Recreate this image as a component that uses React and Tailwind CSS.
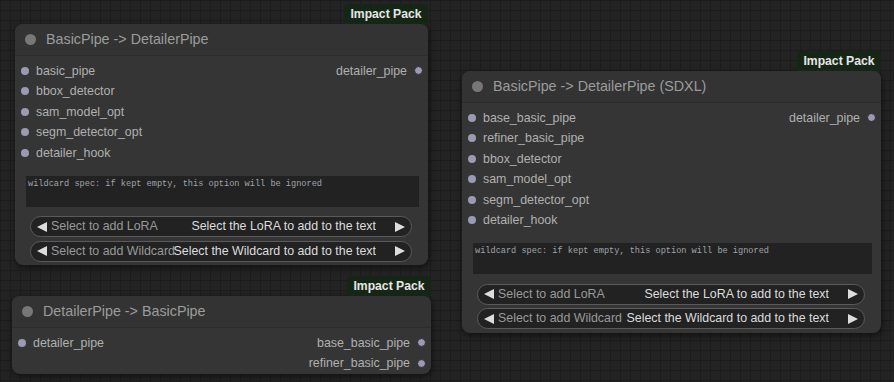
import React from "react";

const FONT = { fontFamily: '"Liberation Sans", Arial, sans-serif' };

function Dot({ out }) {
  return out ? (
    <span className="block w-[9px] h-[9px] rounded-full bg-[#9a9ab0] border-[1.5px] border-[#2a2a33] shrink-0" />
  ) : (
    <span className="block w-[8px] h-[8px] rounded-full bg-[#9a9ab0] shrink-0" />
  );
}

function Row({ input, output }) {
  return (
    <div className="h-[20.5px] flex items-center justify-between text-[12.4px] text-[#b0b0b0] leading-none">
      <div className="flex items-center">
        {input && (
          <>
            <span className="w-[21px] flex items-center pl-[6px]">
              <Dot />
            </span>
            <span>{input}</span>
          </>
        )}
      </div>
      <div className="flex items-center">
        {output && (
          <>
            <span>{output}</span>
            <span className="w-[21px] flex items-center justify-end pr-[5px]">
              <Dot out />
            </span>
          </>
        )}
      </div>
    </div>
  );
}

function TriLeft() {
  return (
    <svg width="10" height="10" viewBox="0 0 10 10" className="shrink-0">
      <polygon points="10,0 10,10 0,5" fill="#dddddd" />
    </svg>
  );
}
function TriRight() {
  return (
    <svg width="10" height="10" viewBox="0 0 10 10" className="shrink-0">
      <polygon points="0,0 0,10 10,5" fill="#dddddd" />
    </svg>
  );
}

function Combo({ label, value }) {
  return (
    <div className="h-[21px] ml-[15px] mr-[16px] rounded-full bg-[#222222] border border-[#5a5a5a] flex items-center pl-[6px] pr-[6px] text-[12.4px] leading-none">
      <TriLeft />
      <div className="flex-1 grid items-center ml-[4px] mr-[19px] overflow-hidden">
        <span className="[grid-area:1/1] justify-self-start text-[#999999] whitespace-nowrap">{label}</span>
        <span className="[grid-area:1/1] justify-self-end text-[#dddddd] whitespace-nowrap">{value}</span>
      </div>
      <TriRight />
    </div>
  );
}

function Widgets() {
  return (
    <div className="flex flex-col">
      <div className="mt-[12.5px] h-[31px] ml-[11px] mr-[9px] bg-[#222222] px-[2px] pt-[4px]">
        <div
          className="text-[8.6px] text-[#a0a4ac] leading-none whitespace-nowrap"
          style={{ fontFamily: '"Liberation Mono", "DejaVu Sans Mono", monospace' }}
        >
          wildcard spec: if kept empty, this option will be ignored
        </div>
      </div>
      <div className="mt-[9.5px] flex flex-col gap-[3.5px] pb-[3.5px]">
        <Combo label="Select to add LoRA" value="Select the LoRA to add to the text" />
        <Combo label="Select to add Wildcard" value="Select the Wildcard to add to the text" />
      </div>
    </div>
  );
}

function Node({ left, top, width, title, rows, widgets }) {
  return (
    <div className="absolute" style={{ left, top, width }}>
      <div className="absolute bottom-full right-0 w-[84px] h-[20px] rounded-t-[5px] bg-[#162616] flex items-center justify-center text-[12.2px] font-bold text-[#e6e6e6] leading-none">
        Impact Pack
      </div>
      <div className="rounded-[8px] bg-[#353535] shadow-[1px_2px_6px_rgba(0,0,0,0.55)] overflow-hidden">
        <div className="h-[31.5px] bg-[#333333] border-b border-[#2c2c2c] flex items-center pl-[10px]">
          <span className="block w-[11px] h-[11px] rounded-full bg-[#777777]" />
          <span className="ml-[10px] text-[14.3px] text-[#9c9c9c] leading-none">{title}</span>
        </div>
        <div className="pt-[5px]">
          {rows.map((r, i) => (
            <Row key={i} input={r[0]} output={r[1]} />
          ))}
        </div>
        {widgets && <Widgets />}
      </div>
    </div>
  );
}

export default function App() {
  return (
    <div
      className="relative w-[894px] h-[382px] overflow-hidden bg-[#232323] [background-image:linear-gradient(to_right,#1c1c1c_1px,transparent_1px),linear-gradient(to_bottom,#1c1c1c_1px,transparent_1px)] [background-size:10px_10px]"
      style={FONT}
    >
      <Node
        left={15}
        top={24}
        width={413}
        title="BasicPipe -> DetailerPipe"
        rows={[
          ["basic_pipe", "detailer_pipe"],
          ["bbox_detector"],
          ["sam_model_opt"],
          ["segm_detector_opt"],
          ["detailer_hook"],
        ]}
        widgets
      />
      <Node
        left={12}
        top={296}
        width={419}
        title="DetailerPipe -> BasicPipe"
        rows={[
          ["detailer_pipe", "base_basic_pipe"],
          [null, "refiner_basic_pipe"],
        ]}
      />
      <Node
        left={462}
        top={71}
        width={419}
        title="BasicPipe -> DetailerPipe (SDXL)"
        rows={[
          ["base_basic_pipe", "detailer_pipe"],
          ["refiner_basic_pipe"],
          ["bbox_detector"],
          ["sam_model_opt"],
          ["segm_detector_opt"],
          ["detailer_hook"],
        ]}
        widgets
      />
    </div>
  );
}
